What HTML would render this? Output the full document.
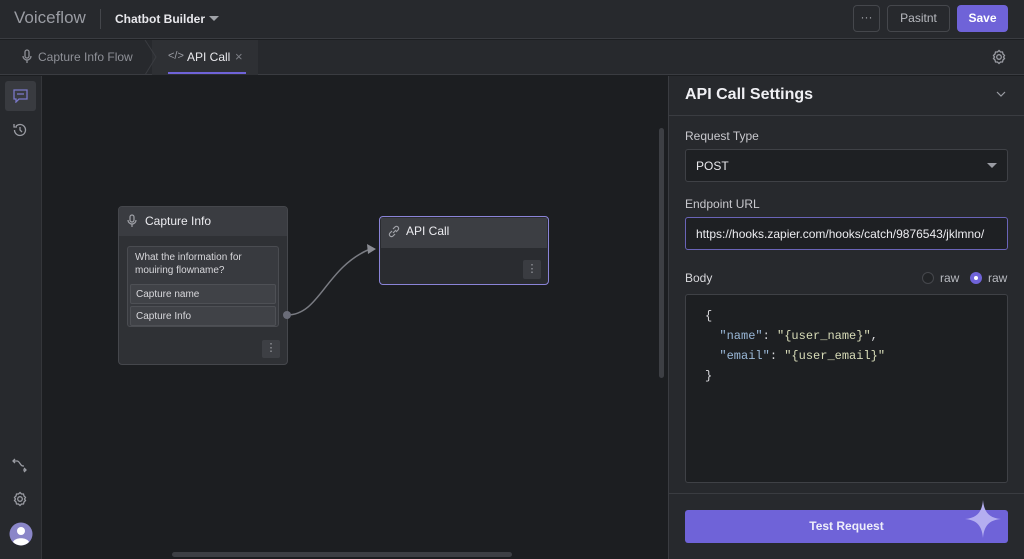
<!DOCTYPE html>
<html><head><style>
*{box-sizing:border-box;margin:0;padding:0}
body{width:1024px;height:559px;overflow:hidden;background:#1c1e21;font-family:"Liberation Sans",sans-serif;color:#e6e6ea;position:relative}
.a{position:absolute}
</style></head><body>
<div class="a" style="left:0;top:0;width:1024px;height:39px;background:#27292d;border-bottom:1px solid #3a3c41"></div>
<div class="a" style="left:14px;top:8px;font-size:17px;color:#9a9ca3">Voiceflow</div>
<div class="a" style="left:100px;top:9px;width:1px;height:20px;background:#44464b"></div>
<div class="a" style="left:115px;top:12px;font-size:12px;font-weight:bold;color:#e8e8ec">Chatbot Builder</div>
<div class="a" style="left:209px;top:16px;border-left:5px solid transparent;border-right:5px solid transparent;border-top:5px solid #a0a2a8"></div>
<div class="a" style="left:853px;top:5px;width:27px;height:27px;border:1px solid #45474c;border-radius:4px;color:#a0a2a8;font-size:12px;text-align:center;line-height:22px">···</div>
<div class="a" style="left:887px;top:5px;width:63px;height:27px;border:1px solid #45474c;border-radius:4px;color:#b8bac0;font-size:12px;text-align:center;line-height:25px">Pasitnt</div>
<div class="a" style="left:957px;top:5px;width:51px;height:27px;background:#6f63d8;border-radius:4px;color:#fff;font-size:12px;font-weight:bold;text-align:center;line-height:27px">Save</div>
<div class="a" style="left:0;top:40px;width:1024px;height:35px;background:#27292d;border-bottom:1px solid #3a3c41"></div>
<div class="a" style="left:152px;top:40px;width:106px;height:35px;background:#2e3034"></div>
<div class="a" style="left:168px;top:72px;width:78px;height:2px;background:#6f63d8"></div>
<svg class="a" style="left:20px;top:49px" width="14" height="16" viewBox="0 0 14 16" fill="none" stroke="#8e9097" stroke-width="1.3"><rect x="5" y="1" width="4" height="8" rx="2"/><path d="M3 7a4 4 0 0 0 8 0M7 11v3"/></svg>
<div class="a" style="left:38px;top:50px;font-size:12px;color:#8e9097">Capture Info Flow</div>
<svg class="a" style="left:144px;top:40px" width="14" height="35"><path d="M1 0L12 17L1 35" stroke="#3a3c41" fill="none"/></svg>
<div class="a" style="left:168px;top:50px;font-size:11px;color:#9a9ca3">&lt;/&gt;</div>
<div class="a" style="left:187px;top:50px;font-size:12px;color:#e8e8ec">API Call</div>
<div class="a" style="left:235px;top:49px;font-size:13px;color:#7e8087">×</div>
<svg class="a" style="left:991px;top:49px" width="16" height="16" viewBox="0 0 16 16" fill="none" stroke="#9a9ca3" stroke-width="1.3"><circle cx="8" cy="8" r="2.3"/><path d="M8 1.5l1.5 1.5h2l.5 2 1.5 1.5-1 1.5 1 1.5-1.5 1.5-.5 2h-2L8 14.5 6.5 13h-2L4 11 2.5 9.5l1-1.5-1-1.5L4 5l.5-2h2z"/></svg>
<div class="a" style="left:0;top:76px;width:42px;height:483px;background:#27292d;border-right:1px solid #34363a"></div>
<div class="a" style="left:5px;top:81px;width:31px;height:30px;background:#393b40;border-radius:3px"></div>
<svg class="a" style="left:13px;top:89px" width="15" height="14" viewBox="0 0 15 14" fill="none" stroke="#7a78c8" stroke-width="1.3"><path d="M1 1h13v9H6l-3 3v-3H1z"/><path d="M4 5h7"/></svg>
<svg class="a" style="left:12px;top:122px" width="16" height="16" viewBox="0 0 16 16" fill="none" stroke="#9a9ca3" stroke-width="1.3"><path d="M2.5 8a5.5 5.5 0 1 0 1.6-3.9M2 2v3h3M8 5v3l2 2"/></svg>
<svg class="a" style="left:12px;top:457px" width="16" height="16" viewBox="0 0 16 16" fill="none" stroke="#9a9ca3" stroke-width="1.3"><path d="M3 2l-2 2 2 2M1 4h4c3 0 3 5 6 5h1M12 11l2 2-2 2M14 13h-3"/></svg>
<svg class="a" style="left:12px;top:491px" width="16" height="16" viewBox="0 0 16 16" fill="none" stroke="#9a9ca3" stroke-width="1.3"><circle cx="8" cy="8" r="2.3"/><path d="M8 1.5l1.5 1.5h2l.5 2 1.5 1.5-1 1.5 1 1.5-1.5 1.5-.5 2h-2L8 14.5 6.5 13h-2L4 11 2.5 9.5l1-1.5-1-1.5L4 5l.5-2h2z"/></svg>
<svg class="a" style="left:9px;top:522px" width="24" height="24" viewBox="0 0 24 24"><circle cx="12" cy="12" r="11.5" fill="#8a86c8"/><circle cx="12" cy="9" r="4" fill="#fff"/><path d="M4 20c2-5 14-5 16 0a11 11 0 0 1-16 0z" fill="#fff"/></svg>
<div class="a" style="left:659px;top:128px;width:5px;height:250px;background:#3d3f44;border-radius:3px"></div>
<div class="a" style="left:172px;top:552px;width:340px;height:5px;background:#3d3f44;border-radius:3px"></div>
<div class="a" style="left:118px;top:206px;width:170px;height:159px;background:#2f3135;border:1px solid #45474c;border-radius:4px"></div>
<div class="a" style="left:119px;top:207px;width:168px;height:29px;background:#3a3c41;border-radius:3px 3px 0 0"></div>
<svg class="a" style="left:127px;top:214px" width="10" height="14" viewBox="0 0 10 14" fill="none" stroke="#a0a2a8" stroke-width="1.2"><rect x="3" y="1" width="4" height="7" rx="2"/><path d="M1 6a4 4 0 0 0 8 0M5 10v3"/></svg>
<div class="a" style="left:145px;top:214px;font-size:12px;color:#ececf0">Capture Info</div>
<div class="a" style="left:127px;top:246px;width:152px;height:81px;background:#383a3f;border:1px solid #4a4c51;border-radius:3px"></div>
<div class="a" style="left:135px;top:251px;font-size:10px;line-height:13px;color:#d8d8dc">What the information for<br>mouiring flowname?</div>
<div class="a" style="left:130px;top:284px;width:146px;height:20px;background:#404247;border:1px solid #4e5055;border-radius:2px;font-size:10px;color:#d8d8dc;padding:4px 5px">Capture name</div>
<div class="a" style="left:130px;top:306px;width:146px;height:20px;background:#404247;border:1px solid #4e5055;border-radius:2px;font-size:10px;color:#d8d8dc;padding:4px 5px">Capture Info</div>
<div class="a" style="left:262px;top:340px;width:18px;height:18px;background:#3d3f44;border-radius:2px;color:#a0a2a8;font-size:11px;text-align:center;line-height:17px">⋮</div>
<svg class="a" style="left:280px;top:240px" width="100" height="85"><path d="M7 75C40 75 45 28 90 9" stroke="#7a7c83" stroke-width="1.5" fill="none"/><path d="M87 4L96 9L88 14z" fill="#8a8c93"/><circle cx="7" cy="75" r="4" fill="#6a6c78"/></svg>
<div class="a" style="left:379px;top:216px;width:170px;height:69px;background:#2a2c30;border:1.5px solid #8a84d8;border-radius:4px"></div>
<div class="a" style="left:381px;top:218px;width:166px;height:30px;background:#3c3e43"></div>
<svg class="a" style="left:388px;top:225px" width="12" height="13" viewBox="0 0 12 13" fill="none" stroke="#a0a2a8" stroke-width="1.2"><path d="M5 8l3-3M4 6L2 8a2 2 0 0 0 3 3l2-2M8 7l2-2a2 2 0 0 0-3-3L5 4"/></svg>
<div class="a" style="left:406px;top:224px;font-size:12px;color:#ececf0">API Call</div>
<div class="a" style="left:523px;top:260px;width:18px;height:19px;background:#3a3c41;border-radius:2px;color:#a0a2a8;font-size:11px;text-align:center;line-height:18px">⋮</div>
<div class="a" style="left:668px;top:76px;width:356px;height:483px;background:#27292d;border-left:1px solid #3a3c41"></div>
<div class="a" style="left:685px;top:86px;font-size:16px;font-weight:600;color:#f0f0f4">API Call Settings</div>
<svg class="a" style="left:996px;top:91px" width="10" height="7"><path d="M1 1l4 4 4-4" stroke="#9a9ca3" fill="none" stroke-width="1.2"/></svg>
<div class="a" style="left:669px;top:115px;width:355px;height:1px;background:#3a3c41"></div>
<div class="a" style="left:685px;top:129px;font-size:12px;color:#c8c8cd">Request Type</div>
<div class="a" style="left:685px;top:149px;width:323px;height:33px;background:#1e2023;border:1px solid #3f4146;border-radius:3px;font-size:12px;color:#e8e8ec;padding:9px 10px">POST</div>
<div class="a" style="left:987px;top:163px;border-left:5px solid transparent;border-right:5px solid transparent;border-top:5px solid #9a9ca3"></div>
<div class="a" style="left:685px;top:197px;font-size:12px;color:#c8c8cd">Endpoint URL</div>
<div class="a" style="left:685px;top:217px;width:323px;height:33px;background:#1e2023;border:1px solid #6a64b8;border-radius:3px;font-size:12px;color:#ececf0;padding:9px 10px;white-space:nowrap">https://hooks.zapier.com/hooks/catch/9876543/jklmno/</div>
<div class="a" style="left:685px;top:271px;font-size:12px;color:#d8d8dc">Body</div>
<div class="a" style="left:922px;top:272px;width:12px;height:12px;border-radius:50%;border:1px solid #45474c;background:#222427"></div>
<div class="a" style="left:940px;top:271px;font-size:12px;color:#b8bac0">raw</div>
<div class="a" style="left:970px;top:272px;width:12px;height:12px;border-radius:50%;background:#6f63d8"><div style="margin:4px;width:4px;height:4px;border-radius:50%;background:#fff"></div></div>
<div class="a" style="left:988px;top:271px;font-size:12px;color:#b8bac0">raw</div>
<div class="a" style="left:685px;top:294px;width:323px;height:189px;background:#1d1f22;border:1px solid #3f4146;border-radius:3px"></div>
<pre class="a" style="left:705px;top:306px;font-family:'Liberation Mono',monospace;font-size:12px;line-height:20px;color:#d8d8dc">{
  <span style="color:#9ab8d8">"name"</span>: <span style="color:#d8dcb8">"{user_name}"</span>,
  <span style="color:#9ab8d8">"email"</span>: <span style="color:#d8dcb8">"{user_email}"</span>
}</pre>
<div class="a" style="left:669px;top:493px;width:355px;height:1px;background:#3a3c41"></div>
<div class="a" style="left:685px;top:510px;width:323px;height:33px;background:#6f63d8;border-radius:3px;font-size:12px;font-weight:bold;color:#eeeefa;text-align:center;line-height:33px">Test Request</div>
<svg class="a" style="left:965px;top:500px" width="36" height="38" viewBox="0 0 36 38"><path d="M18 0C19 12 24 18 36 19C24 20 19 26 18 38C17 26 12 20 0 19C12 18 17 12 18 0z" fill="#b4aef0"/></svg>
</body></html>
